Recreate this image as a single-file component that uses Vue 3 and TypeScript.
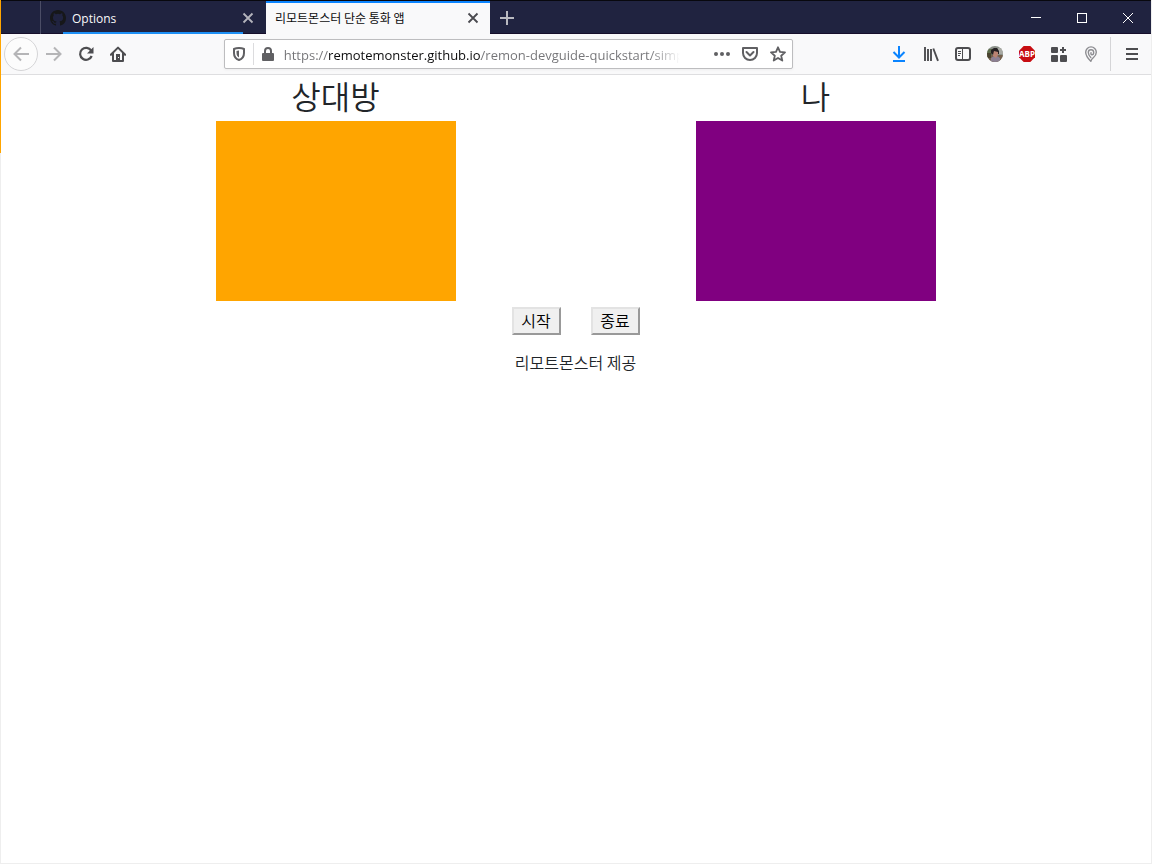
<script setup lang="ts">
import { ref } from 'vue'

const address = ref('https://remotemonster.github.io/remon-devguide-quickstart/simple-call')
</script>

<template>
  <div class="window">
    <header class="tabs">
      <div class="tab tab-back">
        <svg class="github" width="16" height="16" viewBox="0 0 16 16"><path fill="#161719" d="M8 0C3.58 0 0 3.58 0 8c0 3.54 2.29 6.53 5.47 7.59.4.07.55-.17.55-.38v-1.49c-2.01.44-2.53-.49-2.69-.94-.09-.23-.48-.94-.82-1.13-.28-.15-.68-.52-.01-.53.63-.01 1.08.58 1.23.82.72 1.21 1.87.87 2.33.66.07-.52.28-.87.51-1.07-1.78-.2-3.64-.89-3.64-3.95 0-.87.31-1.59.82-2.15-.08-.2-.36-1.02.08-2.12 0 0 .67-.21 2.2.82a7.6 7.6 0 0 1 4 0c1.53-1.04 2.2-.82 2.2-.82.44 1.1.16 1.92.08 2.12.51.56.82 1.27.82 2.15 0 3.07-1.87 3.75-3.65 3.95.29.25.54.73.54 1.48v2.2c0 .21.15.46.55.38A8 8 0 0 0 16 8c0-4.42-3.58-8-8-8z" /></svg>
        <span class="tab-title">Options</span>
        <button class="tab-close" aria-label="Close tab"><svg width="12" height="12" viewBox="0 0 12 12"><path d="M1.5 1.5l9 9m0-9l-9 9" stroke="#b4b4bc" stroke-width="1.8" /></svg></button>
      </div>
      <div class="tab tab-active">
        <span class="tab-title">리모트몬스터 단순 통화 앱</span>
        <button class="tab-close" aria-label="Close tab"><svg width="12" height="12" viewBox="0 0 12 12"><path d="M1.5 1.5l9 9m0-9l-9 9" stroke="#4a4a4f" stroke-width="1.8" /></svg></button>
      </div>
      <button class="new-tab" aria-label="New tab"><svg width="14" height="14" viewBox="0 0 14 14"><path d="M7 0v14M0 7h14" stroke="#b9b9c0" stroke-width="2" /></svg></button>
      <div class="controls">
        <button aria-label="Minimize"><svg width="10" height="10" viewBox="0 0 10 10"><path d="M0 4.5h10" stroke="#fff" /></svg></button>
        <button aria-label="Maximize"><svg width="10" height="10" viewBox="0 0 10 10"><rect x=".5" y=".5" width="9" height="9" fill="none" stroke="#fff" /></svg></button>
        <button aria-label="Close"><svg width="10" height="10" viewBox="0 0 10 10"><path d="M0 0l10 10M10 0L0 10" stroke="#fff" /></svg></button>
      </div>
    </header>

    <nav class="toolbar">
      <button class="back" aria-label="Back"><svg width="16" height="16" viewBox="0 0 16 16"><path d="M16 8H1.5M8 1.5L1.5 8 8 14.5" fill="none" stroke="#b5b5b7" stroke-width="2" /></svg></button>
      <button class="tool" aria-label="Forward"><svg width="16" height="16" viewBox="0 0 16 16"><path d="M0 8h14.5M8 1.5L14.5 8 8 14.5" fill="none" stroke="#b5b5b7" stroke-width="2" /></svg></button>
      <button class="tool" aria-label="Reload"><svg width="16" height="16" viewBox="0 0 16 16"><path d="M13.2 4.6A6 6 0 1 0 13.7 10" fill="none" stroke="#4d4d50" stroke-width="2.2" /><path d="M15.5 1v6.5H9z" fill="#4d4d50" /></svg></button>
      <button class="tool" aria-label="Home"><svg width="16" height="16" viewBox="0 0 16 16"><path d="M.8 8.8L8 1.6l7.2 7.2M3 7v8h10V7" fill="none" stroke="#4d4d50" stroke-width="2" stroke-linejoin="round" stroke-linecap="round" /><path d="M6 8h4v7H6z" fill="#4d4d50" /><path d="M8 11h1v1H8z" fill="#f9f9fa" /></svg></button>
      <div class="space"></div>
      <div class="urlbar">
        <button class="shield" aria-label="Tracking protection"><svg width="14" height="16" viewBox="0 0 14 16"><path d="M7 2C5 2 3 2.500 2 3v4c0 3.500 2 6 5 7 3-1 5-3.500 5-7V3c-1-.5-3-1-5-1z" fill="none" stroke="#606063" stroke-width="2" stroke-linejoin="round" /><path d="M7 4.500C6 4.500 5 4.700 4.500 5v2c0 2 .9 3.600 2.500 4.500z" fill="#606063" /></svg></button>
        <button class="lock" aria-label="Connection is secure"><svg width="12" height="14" viewBox="0 0 12 14"><rect y="6" width="12" height="8" rx="1" fill="#606063" /><path d="M3 7V4a3 3 0 0 1 6 0v3" fill="none" stroke="#606063" stroke-width="2" /></svg></button>
        <input v-model="address" class="address" type="text" aria-label="Address" spellcheck="false" />
        <button class="action" aria-label="Page actions"><svg width="16" height="16" viewBox="0 0 16 16" fill="#606063"><circle cx="2" cy="8" r="2" /><circle cx="8" cy="8" r="2" /><circle cx="14" cy="8" r="2" /></svg></button>
        <button class="action" aria-label="Save to Pocket"><svg width="16" height="16" viewBox="0 0 16 16" fill="none" stroke="#606063" stroke-width="2" stroke-linecap="round" stroke-linejoin="round"><path d="M1 2h14v5a7 7 0 0 1-14 0z" /><path d="M4.500 6L8 9.500 11.500 6" /></svg></button>
        <button class="action" aria-label="Bookmark"><svg width="16" height="16" viewBox="0 0 16 16"><path d="M8 1.300l2 4.600 5 .5-3.800 3.300 1.100 4.900L8 12l-4.300 2.600 1.100-4.900L1 6.400l5-.5z" fill="none" stroke="#606063" stroke-width="1.800" stroke-linejoin="round" /></svg></button>
      </div>
      <div class="space"></div>
      <button class="tool" aria-label="Downloads"><svg width="16" height="16" viewBox="0 0 16 16"><path d="M8 0v11M2.500 6L8 11.500 13.500 6M2 15h12" fill="none" stroke="#0a84ff" stroke-width="2" /></svg></button>
      <button class="tool" aria-label="Library"><svg width="16" height="16" viewBox="0 0 16 16"><path d="M2 1v14M5 3v12M8 3v12M10.300 2.500L15 14.800" fill="none" stroke="#4d4d50" stroke-width="1.900" /></svg></button>
      <button class="tool" aria-label="Sidebars"><svg width="16" height="16" viewBox="0 0 16 16"><rect x="1" y="2" width="14" height="12" rx="2" fill="none" stroke="#4d4d50" stroke-width="2" /><path d="M7.500 3v10" stroke="#4d4d50" /><path d="M3 5.500h3M3 7.500h3M3 9.500h2" stroke="#4d4d50" /></svg></button>
      <button class="tool" aria-label="Account"><svg width="16" height="16" viewBox="0 0 16 16"><defs><clipPath id="face"><circle cx="8" cy="8" r="8" /></clipPath></defs><g clip-path="url(#face)"><path fill="#8b9089" d="M0 0h16v16H0z" /><path fill="#5e6d4c" d="M0 3h5v8H0z" /><path fill="#a9aaa4" d="M11 2h5v6h-5z" /><path fill="#75604c" d="M0 9h16v7H0z" /><path fill="#49432f" d="M0 7h4v5H0z" /><path fill="#8c8093" d="M4 12l3-2h3l3 2v4H4z" /><path fill="#b98372" d="M6 5h5v4l-2 3-3-2z" /><path fill="#252022" d="M4 7V4l3-2h3l2 3v3h-1V6L7 5 6 9z" /></g></svg></button>
      <button class="tool" aria-label="Adblock Plus"><svg width="16" height="16" viewBox="0 0 16 16"><path d="M4.700 0h6.600L16 4.700v6.600L11.300 16H4.700L0 11.300V4.700z" fill="#c70d12" /><text x="8" y="11" text-anchor="middle" class="abp">ABP</text></svg></button>
      <button class="tool" aria-label="Extensions"><svg width="16" height="16" viewBox="0 0 16 16" fill="#4d4d50"><rect y="1" width="7" height="6" rx="1" /><rect y="9" width="7" height="7" rx="1" /><rect x="9" y="9" width="7" height="7" rx="1" /><path d="M11 1h2v2h2v2h-2v2h-2V5H9V3h2z" /></svg></button>
      <button class="tool" aria-label="Location"><svg width="16" height="16" viewBox="0 0 16 16"><path d="M7.800 15.300C5 12.500 2.700 9.400 2.700 6.200a5.300 5.300 0 0 1 10.600 0c0 2.300-1.300 4-2.800 5.300-1.400 1.200-2.400 2.100-2.700 3.800M7.800 11.500C6.300 10 5.300 8.300 5.300 6.500a2.700 2.700 0 0 1 5.400 0c0 1.300-.8 2.200-1.700 2.200S7.700 7.900 8 6.800" fill="none" stroke="#8d8d91" stroke-width="1.400" stroke-linecap="round" /></svg></button>
      <div class="divider"></div>
      <button class="tool" aria-label="Menu"><svg width="12" height="12" viewBox="0 0 12 12"><path d="M0 1h12M0 6h12M0 11h12" stroke="#4d4d50" stroke-width="2" /></svg></button>
    </nav>

    <main class="page">
      <div class="videos">
        <section class="party">
          <h2>상대방</h2>
          <div class="video remote"></div>
        </section>
        <section class="party">
          <h2>나</h2>
          <div class="video local"></div>
        </section>
      </div>
      <div class="buttons">
        <button class="call">시작</button>
        <button class="call">종료</button>
      </div>
      <p class="credit">리모트몬스터 제공</p>
    </main>
    <div class="accent"></div>
  </div>
</template>

<style>
body {
  margin: 0;
}
</style>

<style scoped>
.window {
  position: relative;
  box-sizing: border-box;
  display: flex;
  flex-direction: column;
  min-height: 100vh;
  border-right: 1px solid #eee;
  border-bottom: 1px solid #eee;
  background: #fff;
  box-shadow: inset 1px 0 #eee;
  font-family: "Open Sans", "Noto Sans CJK KR", sans-serif;
}
.window * {
  box-sizing: border-box;
}
button {
  display: flex;
  align-items: center;
  justify-content: center;
  flex: none;
  padding: 0;
  border: 0;
  background: none;
}
svg {
  display: block;
  flex: none;
}
.accent {
  position: absolute;
  left: 0;
  top: 0;
  width: 1px;
  height: 153px;
  background: #ffa500;
}
.tabs {
  display: flex;
  height: 34px;
  padding-left: 40px;
  border-top: 1px solid #08080e;
  background: #202340;
  box-shadow: inset 0 -1px #160f2b;
}
.tab {
  position: relative;
  display: flex;
  align-items: center;
  flex: 0 1 225px;
  min-width: 0;
  padding: 0 12px 0 9px;
  font-size: 12px;
}
.tab-back {
  flex-basis: 226px;
  border-left: 1px solid #4b4d66;
  color: #f9f9fa;
}
.tab-back::after {
  content: "";
  position: absolute;
  left: 22px;
  right: 23px;
  bottom: 0;
  height: 2px;
  background: #1e90f5;
}
.tab-active {
  border-top: 2px solid #0a84ff;
  background: #f9f9fa;
  color: #0c0c0d;
  flex-basis: 224px;
  padding: 0 11px 2px 9px;
}
.github {
  margin-right: 6px;
}
.tab-title {
  flex: 1;
  padding-top: 2px;
  white-space: nowrap;
}
.tab-active .tab-title {
  padding-top: 0;
  font-family: "Noto Sans CJK KR", sans-serif;
}
.new-tab {
  width: 34px;
}
.controls {
  display: flex;
  margin-left: auto;
}
.controls button {
  width: 46px;
}
.toolbar {
  display: flex;
  align-items: center;
  height: 41px;
  padding: 0 3px 0 4px;
  border-bottom: 1px solid #dedee0;
  background: #f9f9fa;
}
.back {
  width: 34px;
  height: 34px;
  border: 1px solid #d5d5d7;
  border-radius: 50%;
  background: #fcfcfc;
}
.tool {
  width: 32px;
  height: 32px;
}
.space {
  flex: 90 1 0;
}
.urlbar {
  display: flex;
  align-items: center;
  flex: 569 1 0;
  min-width: 0;
  height: 30px;
  border: 1px solid #bdbdbf;
  border-radius: 2px;
  background: #fff;
  box-shadow: 0 1px 3px #0000000d;
}
.shield {
  width: 29px;
  height: 22px;
  border-right: 1px solid #dcdcde;
}
.lock {
  width: 28px;
}
.address {
  flex: 1;
  min-width: 0;
  height: 28px;
  margin: 0 28px 0 2px;
  padding: 2px 0 0;
  border: 0;
  outline: 0;
  background: linear-gradient(90deg, #737376 45px, #0c0c0d 45px, #0c0c0d 197px, #737376 197px, #737376 calc(100% - 30px), transparent);
  background-clip: text;
  -webkit-background-clip: text;
  color: transparent;
  font: 13px/26px "Open Sans", sans-serif;
}
.action {
  width: 28px;
}
.abp {
  font: bold 8px "Open Sans", sans-serif;
  font-stretch: normal;
  fill: #fff;
}
.divider {
  width: 1px;
  height: 34px;
  margin: 0 5px 0 3px;
  background: #d5d5d7;
}
.page {
  flex: 1;
  width: 100%;
  max-width: 960px;
  margin: 0 auto;
  color: #212529;
  font-family: "Noto Sans CJK KR", sans-serif;
  font-size: 16px;
  font-weight: 350;
}
.videos {
  display: grid;
  grid-template-columns: 1fr 1fr;
}
.party {
  text-align: center;
}
h2 {
  margin: 0 0 6px;
  font-size: 32px;
  font-weight: 350;
  line-height: 40px;
}
.video {
  max-width: 240px;
  height: 180px;
  margin: 0 auto;
}
.remote {
  background: #ffa500;
}
.local {
  background: #800080;
}
.buttons {
  display: flex;
  justify-content: center;
  gap: 30px;
  margin-top: 6px;
}
.call {
  width: 49px;
  height: 28px;
  padding-bottom: 2px;
  border: 2px solid;
  border-color: #e3e3e3 #999 #999 #e3e3e3;
  background: #f0f0f0;
  color: #000;
  font: 350 16px/22px "Noto Sans CJK KR", sans-serif;
}
.credit {
  margin: 16px 0;
  line-height: 22px;
  text-align: center;
}
</style>
